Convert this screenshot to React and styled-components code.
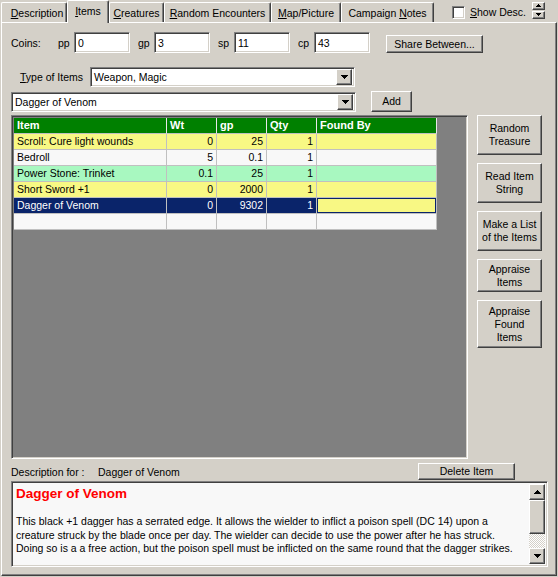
import React from "react";
import styled, { createGlobalStyle, css } from "styled-components";

const GlobalStyle = createGlobalStyle`
  html, body {
    margin: 0;
    padding: 0;
    background: #d4d0c8;
  }
  body {
    font-family: "Liberation Sans", Arial, sans-serif;
    font-size: 10.5px;
    color: #000;
  }
  * {
    box-sizing: border-box;
  }
`;

const raised = css`
  border: 1px solid;
  border-color: #fff #404040 #404040 #fff;
  box-shadow: inset -1px -1px #808080;
  background: #d4d0c8;
`;

const sunken = css`
  border: 1px solid;
  border-color: #808080 #fff #fff #808080;
  box-shadow: inset 1px 1px #404040, inset -1px -1px #d4d0c8;
`;

const Window = styled.div`
  width: 558px;
  height: 577px;
  background: #d4d0c8;
  overflow: hidden;
`;

const TabStrip = styled.div`
  display: flex;
  align-items: flex-end;
  height: 22px;
  padding-left: 1px;
`;

const Tab = styled.div`
  width: ${(p) => p.$w}px;
  height: ${(p) => (p.$active ? 23 : 20)}px;
  margin-bottom: ${(p) => (p.$active ? -1 : 0)}px;
  display: flex;
  align-items: center;
  justify-content: center;
  padding-bottom: ${(p) => (p.$active ? 2 : 0)}px;
  padding-left: ${(p) => p.$pl || 0}px;
  border-top: 1px solid #fff;
  border-left: 1px solid #fff;
  border-right: 1px solid #404040;
  box-shadow: inset -1px 0 #808080;
  border-radius: 2px 2px 0 0;
  background: #d4d0c8;
  position: relative;
  z-index: ${(p) => (p.$active ? 1 : 0)};
  white-space: nowrap;
`;

const ToolArea = styled.div`
  align-self: flex-start;
  height: 22px;
  display: flex;
  align-items: center;
  margin-left: 18px;
`;

const CheckBox = styled.span`
  ${sunken};
  width: 13px;
  height: 13px;
  background: #fff;
  margin-top: 2px;
`;

const CheckLabel = styled.span`
  margin-left: 5px;
  margin-top: 2px;
`;

const Spinner = styled.div`
  display: flex;
  flex-direction: column;
  gap: 1px;
  margin-left: 6px;
  margin-top: -2px;
`;

const SpinButton = styled.div`
  ${raised};
  width: 13px;
  height: 8px;
  display: flex;
  align-items: center;
  justify-content: center;
`;

const Panel = styled.div`
  width: 556px;
  height: 554px;
  margin-left: 1px;
  border-top: 1px solid #fff;
  border-left: 1px solid #fff;
  border-right: 1px solid #404040;
  border-bottom: 1px solid #404040;
  box-shadow: inset -1px -1px #808080;
  padding: 9px 0 0 9px;
`;

const CoinsRow = styled.div`
  display: flex;
  align-items: center;
  height: 21px;
`;

const CoinsTitle = styled.span`
  width: 47px;
`;

const CoinGroup = styled.label`
  width: 72px;
  margin-right: 8px;
  display: flex;
  align-items: center;
  justify-content: space-between;
`;

const Field = styled.div`
  ${sunken};
  width: ${(p) => p.$w}px;
  height: ${(p) => p.$h || 21}px;
  background: #fff;
  display: flex;
  align-items: center;
  padding-left: 3px;
  white-space: nowrap;
`;

const Button = styled.div`
  ${raised};
  width: ${(p) => p.$w}px;
  height: ${(p) => p.$h}px;
  display: flex;
  align-items: center;
  justify-content: center;
  text-align: center;
  line-height: 13px;
  flex-shrink: 0;
`;

const ShareButton = styled(Button)`
  margin-left: 8px;
  align-self: flex-end;
`;

const TypeRow = styled.div`
  display: flex;
  align-items: center;
  margin-top: 14px;
  padding-left: 9px;
`;

const TypeLabel = styled.span`
  width: 70px;
`;

const Select = styled.div`
  ${sunken};
  width: ${(p) => p.$w}px;
  height: 20px;
  background: #fff;
  display: flex;
  align-items: center;
  padding: 2px 2px 2px 3px;
`;

const SelectText = styled.span`
  flex: 1;
  white-space: nowrap;
`;

const DropButton = styled.div`
  ${raised};
  width: 16px;
  height: 16px;
  display: flex;
  align-items: center;
  justify-content: center;
`;

const ItemRow = styled.div`
  display: flex;
  align-items: center;
  margin-top: 4px;
  gap: 15px;
`;

const Main = styled.div`
  display: flex;
  margin-top: 3px;
  gap: 9px;
`;

const GridBox = styled.div`
  ${sunken};
  width: 457px;
  height: 344px;
  background: #808080;
  padding: 2px;
`;

const GridRow = styled.div`
  display: grid;
  grid-template-columns: 153px 50px 50px 50px 120px;
  width: 423px;
`;

const toneColors = {
  yellow: "#f8f884",
  green: "#a8f8c0",
  white: "#f8f8f8",
  navy: "#0a246a",
};

const Cell = styled.div`
  height: 16px;
  line-height: 15px;
  padding: 0 3px;
  border-right: 1px solid #c0c0c0;
  border-bottom: 1px solid #c0c0c0;
  background: ${(p) => toneColors[p.$tone]};
  color: ${(p) => (p.$tone === "navy" ? "#fff" : "#000")};
  text-align: ${(p) => p.$align || "left"};
  white-space: nowrap;
  overflow: hidden;
  box-shadow: ${(p) => (p.$focus ? "inset 0 0 0 1px #0a246a" : "none")};
`;

const HeadCell = styled.div`
  height: 16px;
  line-height: 15px;
  padding: 0 3px;
  background: #008000;
  color: #fff;
  font-weight: bold;
  font-size: 11px;
  border-right: 1px solid #e8e8e8;
  border-bottom: 1px solid #c0c0c0;
  white-space: nowrap;
`;

const SideButtons = styled.div`
  display: flex;
  flex-direction: column;
  gap: 8px;
`;

const DescHeader = styled.div`
  display: flex;
  align-items: center;
  height: 17px;
  margin-top: 4px;
`;

const DescLabel = styled.span`
  width: 87px;
`;

const DescName = styled.span`
  flex: 1;
`;

const DeleteButton = styled(Button)`
  margin-right: 41px;
`;

const DescBox = styled.div`
  ${sunken};
  width: 537px;
  height: 86px;
  margin-top: 1px;
  background: #f8f8f8;
  display: flex;
  padding: 2px;
`;

const DescText = styled.div`
  flex: 1;
  padding: 2px 0 0 2px;
  overflow: hidden;
  white-space: nowrap;
`;

const DescTitle = styled.div`
  color: #ff0000;
  font-weight: bold;
  font-size: 13.5px;
  line-height: 16px;
`;

const DescBody = styled.p`
  margin: 13px 0 0;
  line-height: 13.5px;
`;

const ScrollBar = styled.div`
  width: 16px;
  display: flex;
  flex-direction: column;
`;

const ScrollButton = styled.div`
  ${raised};
  width: 16px;
  height: ${(p) => p.$h}px;
  display: flex;
  align-items: center;
  justify-content: center;
`;

const ScrollTrack = styled.div`
  flex: 1;
  background: repeating-conic-gradient(#d4d0c8 0 25%, #ffffff 0 50%) 0 0 / 2px 2px;
`;

const ArrowDown = ({ small }) =>
  small ? (
    <svg width="5" height="3" viewBox="0 0 5 3" shapeRendering="crispEdges">
      <path d="M0 0h5v1h-1v1h-1v1h-1v-1h-1v-1h-1z" fill="#000" />
    </svg>
  ) : (
    <svg width="7" height="4" viewBox="0 0 7 4" shapeRendering="crispEdges">
      <path d="M0 0h7v1h-1v1h-1v1h-1v1h-1v-1h-1v-1h-1v-1h-1z" fill="#000" />
    </svg>
  );

const ArrowUp = ({ small }) =>
  small ? (
    <svg width="5" height="3" viewBox="0 0 5 3" shapeRendering="crispEdges">
      <path d="M2 0h1v1h1v1h1v1h-5v-1h1v-1h1z" fill="#000" />
    </svg>
  ) : (
    <svg width="7" height="4" viewBox="0 0 7 4" shapeRendering="crispEdges">
      <path d="M3 0h1v1h1v1h1v1h1v1h-7v-1h1v-1h1v-1h1z" fill="#000" />
    </svg>
  );

const tabs = [
  { w: 66, pl: 6, label: <><u>D</u>escription</> },
  { w: 42, label: <><u>I</u>tems</>, active: true },
  { w: 55, label: <><u>C</u>reatures</> },
  { w: 107, label: <><u>R</u>andom Encounters</> },
  { w: 70, label: <><u>M</u>ap/Picture</> },
  { w: 93, label: <>Campaign <u>N</u>otes</> },
];

const coins = [
  ["pp", "0"],
  ["gp", "3"],
  ["sp", "11"],
  ["cp", "43"],
];

const items = [
  { name: "Scroll: Cure light wounds", wt: "0", gp: "25", qty: "1", tone: "yellow" },
  { name: "Bedroll", wt: "5", gp: "0.1", qty: "1", tone: "white" },
  { name: "Power Stone: Trinket", wt: "0.1", gp: "25", qty: "1", tone: "green" },
  { name: "Short Sword +1", wt: "0", gp: "2000", qty: "1", tone: "yellow" },
  { name: "Dagger of Venom", wt: "0", gp: "9302", qty: "1", tone: "yellow", selected: true },
];

const sideButtons = [
  { h: 40, text: <>Random<br />Treasure</> },
  { h: 40, text: <>Read Item<br />String</> },
  { h: 40, text: <>Make a List<br />of the Items</> },
  { h: 33, text: <>Appraise<br />Items</> },
  { h: 48, text: <>Appraise<br />Found<br />Items</> },
];

const ItemGrid = () => (
  <GridBox>
    <GridRow>
      <HeadCell>Item</HeadCell>
      <HeadCell>Wt</HeadCell>
      <HeadCell>gp</HeadCell>
      <HeadCell>Qty</HeadCell>
      <HeadCell>Found By</HeadCell>
    </GridRow>
    {items.map((item) => {
      const tone = item.selected ? "navy" : item.tone;
      return (
        <GridRow key={item.name}>
          <Cell $tone={tone}>{item.name}</Cell>
          <Cell $tone={tone} $align="right">{item.wt}</Cell>
          <Cell $tone={tone} $align="right">{item.gp}</Cell>
          <Cell $tone={tone} $align="right">{item.qty}</Cell>
          <Cell $tone={item.tone} $focus={item.selected} />
        </GridRow>
      );
    })}
    <GridRow>
      <Cell $tone="white" />
      <Cell $tone="white" />
      <Cell $tone="white" />
      <Cell $tone="white" />
      <Cell $tone="white" />
    </GridRow>
  </GridBox>
);

const App = () => (
  <Window>
    <GlobalStyle />
    <TabStrip>
      {tabs.map((tab, i) => (
        <Tab key={i} $w={tab.w} $pl={tab.pl} $active={tab.active}>
          <span>{tab.label}</span>
        </Tab>
      ))}
      <ToolArea>
        <CheckBox />
        <CheckLabel>
          <u>S</u>how Desc.
        </CheckLabel>
        <Spinner>
          <SpinButton>
            <ArrowUp small />
          </SpinButton>
          <SpinButton>
            <ArrowDown small />
          </SpinButton>
        </Spinner>
      </ToolArea>
    </TabStrip>

    <Panel>
      <CoinsRow>
        <CoinsTitle>Coins:</CoinsTitle>
        {coins.map(([name, value]) => (
          <CoinGroup key={name}>
            <span>{name}</span>
            <Field $w={56}>{value}</Field>
          </CoinGroup>
        ))}
        <ShareButton $w={97} $h={18}>Share Between...</ShareButton>
      </CoinsRow>

      <TypeRow>
        <TypeLabel>
          <u>T</u>ype of Items
        </TypeLabel>
        <Select $w={265}>
          <SelectText>Weapon, Magic</SelectText>
          <DropButton>
            <ArrowDown />
          </DropButton>
        </Select>
      </TypeRow>

      <ItemRow>
        <Select $w={345}>
          <SelectText>Dagger of Venom</SelectText>
          <DropButton>
            <ArrowDown />
          </DropButton>
        </Select>
        <Button $w={41} $h={21}>Add</Button>
      </ItemRow>

      <Main>
        <ItemGrid />
        <SideButtons>
          {sideButtons.map((b, i) => (
            <Button key={i} $w={65} $h={b.h}>
              <span>{b.text}</span>
            </Button>
          ))}
        </SideButtons>
      </Main>

      <DescHeader>
        <DescLabel>Description for :</DescLabel>
        <DescName>Dagger of Venom</DescName>
        <DeleteButton $w={97} $h={17}>Delete Item</DeleteButton>
      </DescHeader>

      <DescBox>
        <DescText>
          <DescTitle>Dagger of Venom</DescTitle>
          <DescBody>
            This black +1 dagger has a serrated edge. It allows the wielder to inflict a poison spell (DC 14) upon a
            <br />
            creature struck by the blade once per day. The wielder can decide to use the power after he has struck.
            <br />
            Doing so is a a free action, but the poison spell must be inflicted on the same round that the dagger strikes.
          </DescBody>
        </DescText>
        <ScrollBar>
          <ScrollButton $h={16}>
            <ArrowUp />
          </ScrollButton>
          <ScrollButton $h={34} />
          <ScrollTrack />
          <ScrollButton $h={16}>
            <ArrowDown />
          </ScrollButton>
        </ScrollBar>
      </DescBox>
    </Panel>
  </Window>
);

export default App;
